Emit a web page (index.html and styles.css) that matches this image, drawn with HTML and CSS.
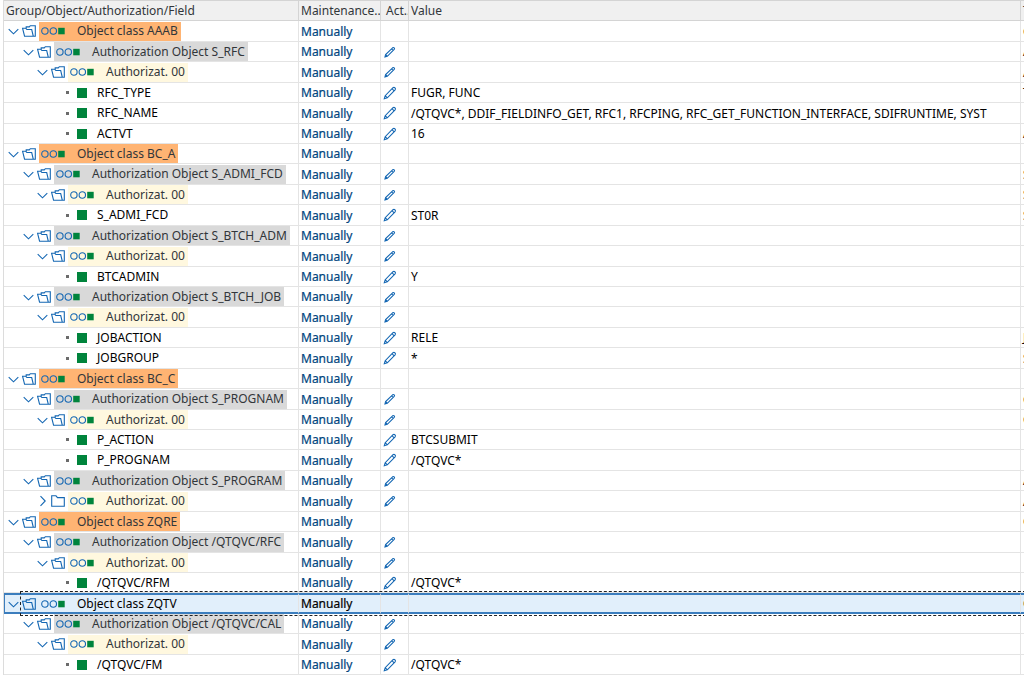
FILE: index.html
```html
<!DOCTYPE html>
<html lang="en">
<head>
<meta charset="utf-8">
<title>Authorizations</title>
<link rel="stylesheet" href="styles.css">
</head>
<body>
<svg class="sprite" aria-hidden="true">
  <symbol id="down" viewBox="0 0 11 12"><path d="M.7 4.200 5.500 8.800 10.300 4.200"/></symbol>
  <symbol id="right" viewBox="0 0 11 12"><path d="M3.500 1.200 8.200 6 3.500 10.800"/></symbol>
  <symbol id="open" viewBox="0 0 14 12"><path d="M2.600 11.300 .6 3.300H3.800L4.900 4.500H9.700L11.300 11.300ZM4.200 3.200V1.900H7.300L8.300.7H13.300V11.300H11.300"/></symbol>
  <symbol id="closed" viewBox="0 0 14 12"><path d="M.7 11.300V.8H5L6.500 2.600H13.300V11.300Z"/></symbol>
  <symbol id="lights" viewBox="0 0 24 8"><circle cx="3.900" cy="4" r="3.200"/><circle cx="12.300" cy="4" r="3.200"/><path class="solid" d="M17.200 .8h6.500v6.500h-6.500z"/></symbol>
  <symbol id="pencil" viewBox="0 0 14 14"><path d="M1.300 12.700 2.200 9.700 10 1.700Q11 .9 12 1.900Q12.900 2.900 12.100 3.800L4.300 11.800ZM9 2.700 11.100 4.800M2.200 9.700 4.300 11.800"/></symbol>
  <symbol id="pen" viewBox="0 0 14 14"><path d="M2 11.900 2.600 9.500 9.600 2.800Q10.500 2.100 11.200 2.800T11.200 4.400L4.300 11.300ZM8.500 3.800 10.200 5.400M2.600 9.500 4.300 11.300"/></symbol>
</svg>
<table class="tree">
<colgroup><col class="c-name"><col class="c-maint"><col class="c-act"><col class="c-value"><col class="c-text"></colgroup>
<thead><tr><th scope="col">Group/Object/Authorization/Field</th><th scope="col">Maintenance..</th><th scope="col" class="act">Act..</th><th scope="col">Value</th><th scope="col">T</th></tr></thead>
<tbody>
<tr class="l0"><td><div class="node"><button aria-label="Collapse"><svg class="arrow"><use href="#down"/></svg></button><svg class="folder"><use href="#open"/></svg><span class="tag"><svg class="lights"><use href="#lights"/></svg>Object class AAAB</span></div></td><td>Manually</td><td></td><td></td><td>C</td></tr>
<tr class="l1"><td><div class="node"><button aria-label="Collapse"><svg class="arrow"><use href="#down"/></svg></button><svg class="folder"><use href="#open"/></svg><span class="tag"><svg class="lights"><use href="#lights"/></svg>Authorization Object S_RFC</span></div></td><td>Manually</td><td><button aria-label="Edit"><svg class="edit"><use href="#pen"/></svg></button></td><td></td><td>A</td></tr>
<tr class="l2"><td><div class="node"><button aria-label="Collapse"><svg class="arrow"><use href="#down"/></svg></button><svg class="folder"><use href="#open"/></svg><span class="tag"><svg class="lights"><use href="#lights"/></svg>Authorizat. 00</span></div></td><td>Manually</td><td><button aria-label="Edit"><svg class="edit"><use href="#pen"/></svg></button></td><td></td><td>A</td></tr>
<tr class="l3"><td><div class="node"><i class="dot"></i><i class="box"></i>RFC_TYPE</div></td><td>Manually</td><td><button aria-label="Edit"><svg class="edit"><use href="#pencil"/></svg></button></td><td>FUGR, FUNC</td><td>T</td></tr>
<tr class="l3"><td><div class="node"><i class="dot"></i><i class="box"></i>RFC_NAME</div></td><td>Manually</td><td><button aria-label="Edit"><svg class="edit"><use href="#pencil"/></svg></button></td><td>/QTQVC*, DDIF_FIELDINFO_GET, RFC1, RFCPING, RFC_GET_FUNCTION_INTERFACE, SDIFRUNTIME, SYST</td><td></td></tr>
<tr class="l3"><td><div class="node"><i class="dot"></i><i class="box"></i>ACTVT</div></td><td>Manually</td><td><button aria-label="Edit"><svg class="edit"><use href="#pencil"/></svg></button></td><td>16</td><td>A</td></tr>
<tr class="l0"><td><div class="node"><button aria-label="Collapse"><svg class="arrow"><use href="#down"/></svg></button><svg class="folder"><use href="#open"/></svg><span class="tag"><svg class="lights"><use href="#lights"/></svg>Object class BC_A</span></div></td><td>Manually</td><td></td><td></td><td></td></tr>
<tr class="l1"><td><div class="node"><button aria-label="Collapse"><svg class="arrow"><use href="#down"/></svg></button><svg class="folder"><use href="#open"/></svg><span class="tag"><svg class="lights"><use href="#lights"/></svg>Authorization Object S_ADMI_FCD</span></div></td><td>Manually</td><td><button aria-label="Edit"><svg class="edit"><use href="#pen"/></svg></button></td><td></td><td>S</td></tr>
<tr class="l2"><td><div class="node"><button aria-label="Collapse"><svg class="arrow"><use href="#down"/></svg></button><svg class="folder"><use href="#open"/></svg><span class="tag"><svg class="lights"><use href="#lights"/></svg>Authorizat. 00</span></div></td><td>Manually</td><td><button aria-label="Edit"><svg class="edit"><use href="#pen"/></svg></button></td><td></td><td>S</td></tr>
<tr class="l3"><td><div class="node"><i class="dot"></i><i class="box"></i>S_ADMI_FCD</div></td><td>Manually</td><td><button aria-label="Edit"><svg class="edit"><use href="#pencil"/></svg></button></td><td>ST0R</td><td>S</td></tr>
<tr class="l1"><td><div class="node"><button aria-label="Collapse"><svg class="arrow"><use href="#down"/></svg></button><svg class="folder"><use href="#open"/></svg><span class="tag"><svg class="lights"><use href="#lights"/></svg>Authorization Object S_BTCH_ADM</span></div></td><td>Manually</td><td><button aria-label="Edit"><svg class="edit"><use href="#pen"/></svg></button></td><td></td><td></td></tr>
<tr class="l2"><td><div class="node"><button aria-label="Collapse"><svg class="arrow"><use href="#down"/></svg></button><svg class="folder"><use href="#open"/></svg><span class="tag"><svg class="lights"><use href="#lights"/></svg>Authorizat. 00</span></div></td><td>Manually</td><td><button aria-label="Edit"><svg class="edit"><use href="#pen"/></svg></button></td><td></td><td></td></tr>
<tr class="l3"><td><div class="node"><i class="dot"></i><i class="box"></i>BTCADMIN</div></td><td>Manually</td><td><button aria-label="Edit"><svg class="edit"><use href="#pencil"/></svg></button></td><td>Y</td><td></td></tr>
<tr class="l1"><td><div class="node"><button aria-label="Collapse"><svg class="arrow"><use href="#down"/></svg></button><svg class="folder"><use href="#open"/></svg><span class="tag"><svg class="lights"><use href="#lights"/></svg>Authorization Object S_BTCH_JOB</span></div></td><td>Manually</td><td><button aria-label="Edit"><svg class="edit"><use href="#pen"/></svg></button></td><td></td><td></td></tr>
<tr class="l2"><td><div class="node"><button aria-label="Collapse"><svg class="arrow"><use href="#down"/></svg></button><svg class="folder"><use href="#open"/></svg><span class="tag"><svg class="lights"><use href="#lights"/></svg>Authorizat. 00</span></div></td><td>Manually</td><td><button aria-label="Edit"><svg class="edit"><use href="#pen"/></svg></button></td><td></td><td></td></tr>
<tr class="l3"><td><div class="node"><i class="dot"></i><i class="box"></i>JOBACTION</div></td><td>Manually</td><td><button aria-label="Edit"><svg class="edit"><use href="#pencil"/></svg></button></td><td>RELE</td><td>J</td></tr>
<tr class="l3"><td><div class="node"><i class="dot"></i><i class="box"></i>JOBGROUP</div></td><td>Manually</td><td><button aria-label="Edit"><svg class="edit"><use href="#pencil"/></svg></button></td><td>*</td><td>S</td></tr>
<tr class="l0"><td><div class="node"><button aria-label="Collapse"><svg class="arrow"><use href="#down"/></svg></button><svg class="folder"><use href="#open"/></svg><span class="tag"><svg class="lights"><use href="#lights"/></svg>Object class BC_C</span></div></td><td>Manually</td><td></td><td></td><td></td></tr>
<tr class="l1"><td><div class="node"><button aria-label="Collapse"><svg class="arrow"><use href="#down"/></svg></button><svg class="folder"><use href="#open"/></svg><span class="tag"><svg class="lights"><use href="#lights"/></svg>Authorization Object S_PROGNAM</span></div></td><td>Manually</td><td><button aria-label="Edit"><svg class="edit"><use href="#pen"/></svg></button></td><td></td><td>C</td></tr>
<tr class="l2"><td><div class="node"><button aria-label="Collapse"><svg class="arrow"><use href="#down"/></svg></button><svg class="folder"><use href="#open"/></svg><span class="tag"><svg class="lights"><use href="#lights"/></svg>Authorizat. 00</span></div></td><td>Manually</td><td><button aria-label="Edit"><svg class="edit"><use href="#pen"/></svg></button></td><td></td><td>C</td></tr>
<tr class="l3"><td><div class="node"><i class="dot"></i><i class="box"></i>P_ACTION</div></td><td>Manually</td><td><button aria-label="Edit"><svg class="edit"><use href="#pencil"/></svg></button></td><td>BTCSUBMIT</td><td></td></tr>
<tr class="l3"><td><div class="node"><i class="dot"></i><i class="box"></i>P_PROGNAM</div></td><td>Manually</td><td><button aria-label="Edit"><svg class="edit"><use href="#pencil"/></svg></button></td><td>/QTQVC*</td><td></td></tr>
<tr class="l1"><td><div class="node"><button aria-label="Collapse"><svg class="arrow"><use href="#down"/></svg></button><svg class="folder"><use href="#open"/></svg><span class="tag"><svg class="lights"><use href="#lights"/></svg>Authorization Object S_PROGRAM</span></div></td><td>Manually</td><td><button aria-label="Edit"><svg class="edit"><use href="#pen"/></svg></button></td><td></td><td>A</td></tr>
<tr class="l2"><td><div class="node"><button aria-label="Expand"><svg class="arrow"><use href="#right"/></svg></button><svg class="folder"><use href="#closed"/></svg><span class="tag"><svg class="lights"><use href="#lights"/></svg>Authorizat. 00</span></div></td><td>Manually</td><td><button aria-label="Edit"><svg class="edit"><use href="#pen"/></svg></button></td><td></td><td>A</td></tr>
<tr class="l0"><td><div class="node"><button aria-label="Collapse"><svg class="arrow"><use href="#down"/></svg></button><svg class="folder"><use href="#open"/></svg><span class="tag"><svg class="lights"><use href="#lights"/></svg>Object class ZQRE</span></div></td><td>Manually</td><td></td><td></td><td>Q</td></tr>
<tr class="l1"><td><div class="node"><button aria-label="Collapse"><svg class="arrow"><use href="#down"/></svg></button><svg class="folder"><use href="#open"/></svg><span class="tag"><svg class="lights"><use href="#lights"/></svg>Authorization Object /QTQVC/RFC</span></div></td><td>Manually</td><td><button aria-label="Edit"><svg class="edit"><use href="#pen"/></svg></button></td><td></td><td></td></tr>
<tr class="l2"><td><div class="node"><button aria-label="Collapse"><svg class="arrow"><use href="#down"/></svg></button><svg class="folder"><use href="#open"/></svg><span class="tag"><svg class="lights"><use href="#lights"/></svg>Authorizat. 00</span></div></td><td>Manually</td><td><button aria-label="Edit"><svg class="edit"><use href="#pen"/></svg></button></td><td></td><td></td></tr>
<tr class="l3"><td><div class="node"><i class="dot"></i><i class="box"></i>/QTQVC/RFM</div></td><td>Manually</td><td><button aria-label="Edit"><svg class="edit"><use href="#pencil"/></svg></button></td><td>/QTQVC*</td><td></td></tr>
<tr class="l0 selected"><td><div class="node"><button aria-label="Collapse"><svg class="arrow"><use href="#down"/></svg></button><svg class="folder"><use href="#open"/></svg><span class="tag"><svg class="lights"><use href="#lights"/></svg>Object class ZQTV</span></div></td><td>Manually</td><td></td><td></td><td>Q</td></tr>
<tr class="l1"><td><div class="node"><button aria-label="Collapse"><svg class="arrow"><use href="#down"/></svg></button><svg class="folder"><use href="#open"/></svg><span class="tag"><svg class="lights"><use href="#lights"/></svg>Authorization Object /QTQVC/CAL</span></div></td><td>Manually</td><td><button aria-label="Edit"><svg class="edit"><use href="#pen"/></svg></button></td><td></td><td></td></tr>
<tr class="l2"><td><div class="node"><button aria-label="Collapse"><svg class="arrow"><use href="#down"/></svg></button><svg class="folder"><use href="#open"/></svg><span class="tag"><svg class="lights"><use href="#lights"/></svg>Authorizat. 00</span></div></td><td>Manually</td><td><button aria-label="Edit"><svg class="edit"><use href="#pen"/></svg></button></td><td></td><td></td></tr>
<tr class="l3"><td><div class="node"><i class="dot"></i><i class="box"></i>/QTQVC/FM</div></td><td>Manually</td><td><button aria-label="Edit"><svg class="edit"><use href="#pencil"/></svg></button></td><td>/QTQVC*</td><td></td></tr>
</tbody>
</table>
</body>
</html>
```
FILE: styles.css
```css
body { margin: 0; padding-left: 3px; background: #fff; overflow-x: hidden; font: 12px/18px "Noto Sans", "Open Sans", sans-serif; color: #000; }
.sprite { position: absolute; width: 0; height: 0; }
svg { display: block; flex: none; fill: none; stroke: #1467b3; stroke-width: 1.1; }
.tree { width: 100%; table-layout: fixed; border-collapse: separate; border-spacing: 0; border-left: 1px solid #dcdcdc; }
.c-name { width: 295px; }
.c-maint { width: 82px; }
.c-act { width: 28px; }
.c-text { width: 3px; }
th, td { box-sizing: border-box; height: 20px; padding: 1px 0 0 2px; border-right: 1px solid #e4e4e4; border-bottom: 1px solid #e4e4e4; text-align: left; font-weight: 400; white-space: nowrap; overflow: hidden; }
th { height: 21px; background: #f0f0f0; border-top: 1px solid #d4d4d4; border-color: #d4d4d4; color: #32363a; }
th.act { padding-left: 5px; }
th:last-child, td:last-child { border-right: 0; }
tbody tr:nth-child(7n+1) td, tbody tr:nth-child(7n+3) td, tbody tr:nth-child(7n+5) td { height: 21px; }
td:first-child, td:nth-child(3) { padding-top: 0; }
td:first-child { padding-left: 0; }
td:nth-child(2) { color: #00457e; -webkit-text-stroke: 0.2px; }
.node { display: flex; align-items: center; height: 19px; padding-left: 4px; }
.l1 .node { padding-left: 19px; }
.l2 .node { padding-left: 33px; }
.l3 .node { padding-left: 62px; }
button { display: block; padding: 0; border: 0; background: none; }
.arrow { width: 11px; height: 12px; }
.folder { width: 14px; height: 12px; margin: 0 3px; }
.tag { display: flex; align-items: center; height: 19px; padding: 0 3px 0 2px; color: #32363a; }
.l0 .tag { background: #ffb473; }
.l1 .tag { background: #d9d9d9; }
.l2 .tag { background: #fff8df; }
.lights { width: 24px; height: 8px; margin-right: 12px; }
.solid { fill: #00843c; stroke: none; }
.dot { width: 3px; height: 3px; margin-right: 8px; background: #6b6b6b; }
.box { width: 10px; height: 10px; margin-right: 10px; background: #00843c; }
.edit { width: 14px; height: 14px; }
.selected { position: relative; line-height: 16px; }
.selected td { padding-top: 0; border-top: 2px solid #3b7dbd; border-bottom: 2px solid #3b7dbd; background: #e1effb; }
.selected td:first-child { border-left: 1px solid #3b7dbd; }
.selected td:nth-child(2) { color: #000; }
.selected .node { height: 16px; padding-left: 3px; }
.selected .tag { height: 16px; background: none; color: #000; }
.selected .node::after { content: ""; position: absolute; top: -2px; bottom: -2px; left: 16px; right: -2px; border: 1px dashed #222; }
```
